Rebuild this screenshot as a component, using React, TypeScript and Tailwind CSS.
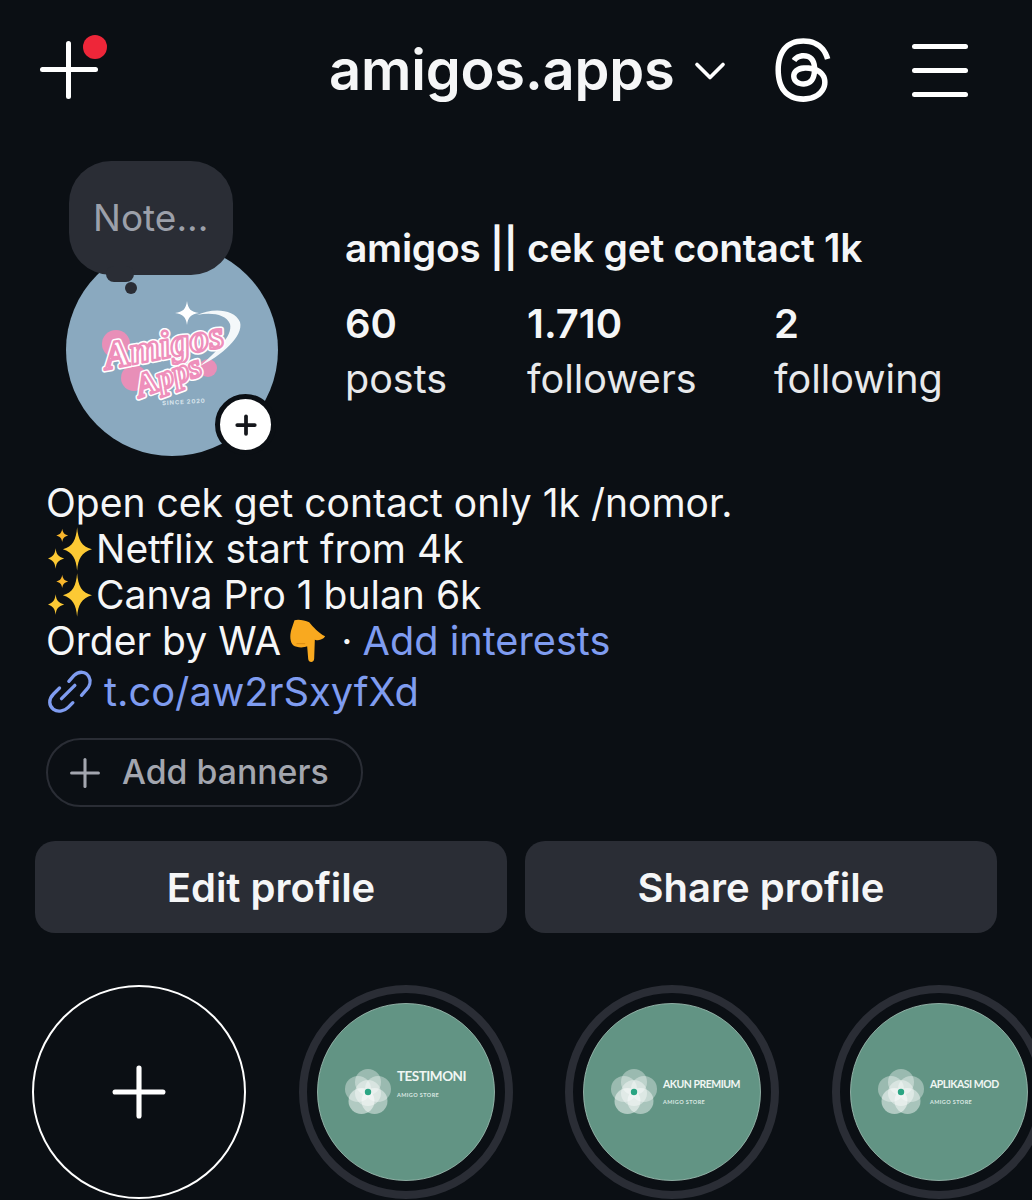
import { Plus, ChevronDown } from 'lucide-react';
import { FaThreads } from 'react-icons/fa6';

const Sparkles = () => (
  <svg viewBox="27 20 133 132" className="w-[44px] h-[44px] shrink-0 ml-[2px] mr-[4px]">
    <path d="M115 20 C118 58 128 78 160 87 C128 96 118 116 115 152 C112 116 102 96 72 87 C102 78 112 58 115 20Z" fill="#fcc934" />
    <path d="M70 25 C72 37 76 42 88 45 C76 48 72 53 70 65 C68 53 64 48 52 45 C64 42 68 37 70 25Z" fill="#f9b62c" />
    <path d="M50 84 C52 102 58 110 76 115 C58 120 52 128 50 146 C48 128 42 120 27 115 C42 110 48 102 50 84Z" fill="#fcc934" />
  </svg>
);

const PointDown = () => (
  <svg viewBox="58 26 110 132" className="w-[37px] h-[44px] shrink-0">
    <path d="M74 30 C85 26 105 30 118 36 C130 50 145 68 166 78 C160 88 147 92 135 88 L133 145 C132 158 116 158 115 145 L112 108 C100 113 80 112 70 105 C60 95 60 75 64 60 Z" fill="#f9a91f" />
    <path d="M80 100 L106 100" stroke="#d98a12" strokeWidth="3" />
  </svg>
);

const LinkIcon = () => (
  <svg viewBox="20 8 140 132" fill="none" stroke="#7f9cf0" strokeWidth="10" strokeLinecap="round" className="w-[47px] h-[44px] shrink-0">
    <path d="M88 42 L103 25 C118 10 140 12 148 28 C156 42 150 58 140 68 L126 84" />
    <path d="M60 62 L42 80 C26 96 28 116 42 126 C56 136 76 130 86 120 L100 106" />
    <path d="M66 94 L106 54" />
  </svg>
);

const Flower = ({ cx, cy }: { cx: number; cy: number }) => (
  <g>
    <circle cx={cx} cy={cy - 10} r="13" fill="#fff" opacity="0.36" />
    <circle cx={cx + 10} cy={cy - 3} r="13" fill="#fff" opacity="0.36" />
    <circle cx={cx + 6.500} cy={cy + 9} r="13" fill="#fff" opacity="0.45" />
    <circle cx={cx - 6.500} cy={cy + 9} r="13" fill="#fff" opacity="0.5" />
    <circle cx={cx - 10} cy={cy - 3} r="13" fill="#fff" opacity="0.36" />
    <circle cx={cx} cy={cy + 1} r="13" fill="#fff" opacity="0.4" />
    <circle cx={cx} cy={cy} r="3.200" fill="#2aa583" />
  </g>
);

const Highlight = ({ title, y, size }: { title: string; y: number; size: number }) => (
  <div className="w-[214px] h-[214px] shrink-0 rounded-full border-[8px] border-[#2a2d35] flex items-center justify-center">
    <svg viewBox="0 0 178 178" className="w-[178px] h-[178px]">
      <circle cx="89" cy="89" r="88.500" fill="#629484" stroke="#a5c4b9" strokeWidth="0.800" />
      <Flower cx={51} cy={89} />
      <text x="80" y={y} fontFamily="Lato, sans-serif" fontWeight="700" fontSize={size} letterSpacing="-0.500" fill="#f0f6f3">{title}</text>
      <text x="80" y={y + 16} fontFamily="Lato, sans-serif" fontWeight="700" fontSize="5.500" letterSpacing="0.400" fill="#dbe8e3">AMIGO STORE</text>
    </svg>
  </div>
);

// the script lettering of the avatar: white outline, pink line, pale fill
const LogoText = ({ text, x, y, size, angle }: { text: string; x: number; y: number; size: number; angle: number }) => (
  <g transform={`rotate(${angle} ${x} ${y})`} fontFamily="'Liberation Serif', serif" fontWeight="700" fontStyle="italic" textAnchor="middle" fontSize={size}>
    <text x={x} y={y} fill="#fff" stroke="#fff" strokeWidth="5.500" strokeLinejoin="round">{text}</text>
    <text x={x} y={y} fill="#fff" stroke="#ee8fbb" strokeWidth="2.400" strokeLinejoin="round">{text}</text>
  </g>
);

export default function App() {
  return (
    <div className="w-[1032px] h-[1200px] overflow-hidden bg-[#0b0f14] text-[#f5f6f7] font-['Inter',sans-serif]">
      {/* top bar */}
      <header className="h-[140px] flex items-center pl-[40px]">
        <div className="relative w-[58px] h-[58px] shrink-0">
          <div className="absolute left-0 top-[26px] w-[58px] h-[5px] rounded-full bg-white" />
          <div className="absolute left-[26px] top-0 w-[5px] h-[58px] rounded-full bg-white" />
          <div className="absolute left-[43px] -top-[6px] w-[24px] h-[24px] rounded-full bg-[#ee2639]" />
        </div>
        <h1 className="ml-[231px] text-[56px] leading-none font-semibold tracking-[-0.2px] whitespace-nowrap">amigos.apps</h1>
        <ChevronDown size={52} strokeWidth={1.700} className="ml-[9px] mt-[2px] shrink-0 text-white" />
        <FaThreads className="ml-[33px] w-[68px] h-[68px] shrink-0 text-white" />
        <div className="ml-[75px] w-[56px] shrink-0 flex flex-col gap-[19px]">
          <div className="h-[5px] rounded-full bg-white" />
          <div className="h-[5px] rounded-full bg-white" />
          <div className="h-[5px] rounded-full bg-white" />
        </div>
      </header>

      {/* avatar + stats */}
      <section className="flex pl-[66px] mt-[21px]">
        <div className="relative w-[212px] h-[295px] shrink-0 flex items-end">
          <div className="w-[212px] h-[212px] rounded-full bg-[#8aa9bf] overflow-hidden">
            <svg viewBox="0 0 212 212" className="w-full h-full">
              <circle cx="50" cy="100" r="14" fill="#e88fb8" />
              <circle cx="68" cy="134" r="13" fill="#e88fb8" />
              <circle cx="142" cy="124" r="9" fill="#e88fb8" />
              <path d="M131 71 C145 64 168 64 174 78 C178 92 155 112 134 122 C150 108 167 92 164 80 C160 70 145 68 131 71Z" fill="#f4f8fa" />
              <path d="M121 57 C122 65 125 68 133 69 C125 70 122 73 121 81 C120 73 117 70 109 69 C117 68 120 65 121 57Z" fill="#fff" />
              <LogoText text="Amigos" x={100} y={114} size={39} angle={-11} />
              <LogoText text="Apps" x={106} y={142} size={33} angle={-20} />
              <text x="118" y="160" fontFamily="'Inter', sans-serif" fontWeight="700" fontSize="6" letterSpacing="0.800" fill="#d8e4ec" textAnchor="middle" transform="rotate(-3 118 160)">SINCE 2020</text>
            </svg>
          </div>
          {/* note bubble */}
          <div className="absolute left-[3px] top-0 w-[164px] h-[114px] rounded-[42px] bg-[#2a2d35] flex items-center pl-[24px] text-[37px] text-[#9ca0aa]">Note...</div>
          <div className="absolute left-[40px] top-[105px] w-[28px] h-[16px] rounded-full bg-[#2a2d35]" />
          <div className="absolute left-[59px] top-[121px] w-[12px] h-[12px] rounded-full bg-[#2a2d35]" />
          {/* add story */}
          <div className="absolute left-[149px] top-[233px] w-[61px] h-[61px] rounded-full bg-white border-[5px] border-[#0b0f14] flex items-center justify-center">
            <Plus size={30} strokeWidth={3} className="text-[#15171c]" />
          </div>
        </div>
        <div className="ml-[67px] pt-[65px]">
          <div className="text-[39px] leading-[44px] font-semibold tracking-[-0.3px] whitespace-nowrap">amigos || cek get contact 1k</div>
          <div className="flex mt-[30px]">
            <div className="w-[182px]">
              <div className="text-[40px] leading-[48px] font-semibold">60</div>
              <div className="text-[39.500px] leading-[62px] text-[#e8e9eb]">posts</div>
            </div>
            <div className="w-[247px]">
              <div className="text-[40px] leading-[48px] font-semibold">1.710</div>
              <div className="text-[39.500px] leading-[62px] text-[#e8e9eb]">followers</div>
            </div>
            <div>
              <div className="text-[40px] leading-[48px] font-semibold">2</div>
              <div className="text-[39.500px] leading-[62px] text-[#e8e9eb]">following</div>
            </div>
          </div>
        </div>
      </section>

      {/* bio */}
      <section className="pl-[46px] mt-[24px] text-[39px] leading-[46px] whitespace-nowrap">
        <div>Open cek get contact only 1k /nomor.</div>
        <div className="flex items-center"><Sparkles />Netflix start from 4k</div>
        <div className="flex items-center"><Sparkles />Canva Pro 1 bulan 6k</div>
        <div className="flex items-center">
          Order by WA<span className="ml-[8px] flex"><PointDown /></span>
          <span className="ml-[15px]">·</span>
          <span className="ml-[10px] text-[39.700px] text-[#7f9cf0]">Add interests</span>
        </div>
        <div className="flex items-center mt-[5px] text-[#7f9cf0]">
          <LinkIcon />
          <span className="ml-[11px] text-[39.800px]">t.co/aw2rSxyfXd</span>
        </div>
      </section>

      <div className="ml-[46px] mt-[23px] w-[317px] h-[69px] rounded-full border-2 border-[#2a2d35] flex items-center pl-[14px] text-[#a3a6af]">
        <Plus size={46} strokeWidth={1.600} className="shrink-0" />
        <span className="ml-[14px] text-[33.800px] font-medium whitespace-nowrap">Add banners</span>
      </div>

      {/* actions */}
      <div className="flex gap-[18px] px-[35px] mt-[34px]">
        <button className="flex-1 h-[92px] pt-[2px] rounded-[20px] bg-[#2a2d35] text-[40px] font-semibold">Edit profile</button>
        <button className="flex-1 h-[92px] pt-[2px] rounded-[20px] bg-[#2a2d35] text-[40px] font-semibold">Share profile</button>
      </div>

      {/* highlights */}
      <div className="flex gap-[52.500px] pl-[32px] mt-[52px]">
        <div className="w-[214px] h-[214px] shrink-0 rounded-full border-2 border-white flex items-center justify-center">
          <Plus size={82} strokeWidth={1.500} className="text-white" />
        </div>
        <Highlight title="TESTIMONI" y={78} size={13.500} />
        <Highlight title="AKUN PREMIUM" y={85} size={10.500} />
        <Highlight title="APLIKASI MOD" y={85} size={10.500} />
      </div>
    </div>
  );
}
